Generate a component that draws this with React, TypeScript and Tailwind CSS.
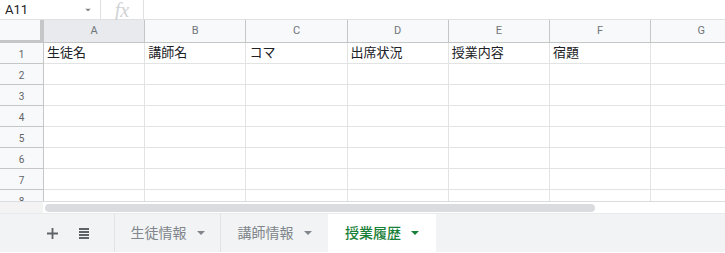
import React from "react";

const COLS = ["A", "B", "C", "D", "E", "F", "G"];
const HEADERS = ["生徒名", "講師名", "コマ", "出席状況", "授業内容", "宿題", ""];
const ROWS = [1, 2, 3, 4, 5, 6, 7, 8];

function Caret({ className = "" }: { className?: string }) {
  return (
    <svg width="8" height="4" viewBox="0 0 8 4" className={className}>
      <path d="M0 0h8L4 4z" fill="currentColor" />
    </svg>
  );
}

export default function App() {
  return (
    <div
      className="w-[725px] h-[253px] overflow-hidden bg-white text-[#202124]"
      style={{ fontFamily: '"Roboto", "Noto Sans CJK JP", sans-serif' }}
    >
      {/* formula bar */}
      <div className="flex h-[19px] items-center">
        <div className="flex w-[100px] items-center justify-between pl-[5px] pr-[8px] text-[13px]">
          <span>A11</span>
          <Caret className="text-[#80868b] scale-75" />
        </div>
        <div className="h-[19px] w-px bg-[#e0e0e0]" />
        <div
          className="flex w-[42px] justify-center text-[20px] italic leading-none text-[#d0d2d4]"
          style={{ fontFamily: '"Liberation Serif", serif' }}
        >
          fx
        </div>
        <div className="h-[19px] w-px bg-[#e0e0e0]" />
      </div>

      {/* column headers */}
      <div className="flex h-[24px] border-t border-[#e0e0e0]">
        <div className="w-[44px] shrink-0 border-b-[3px] border-r-[4px] border-[#c4c6c8] bg-[#f8f9fa]" />
        {COLS.map((c, i) => (
          <div
            key={c}
            className={`flex w-[101.2px] shrink-0 items-center justify-center border-b border-r border-[#c4c7c5] text-[11px] text-[#70757a] ${
              i === 0 ? "bg-[#e8eaed]" : "bg-[#f8f9fa]"
            }`}
          >
            {c}
          </div>
        ))}
      </div>

      {/* rows */}
      <div className="h-[159px] overflow-hidden border-b border-[#dadce0]">
        {ROWS.map((r) => (
          <div key={r} className="flex h-[21px]">
            <div className="flex w-[44px] shrink-0 items-center justify-center border-b border-r border-[#c4c7c5] bg-[#f8f9fa] pt-[2px] text-[10px] text-[#5f6368]">
              {r}
            </div>
            {COLS.map((c, i) => (
              <div
                key={c}
                className="flex w-[101.2px] shrink-0 items-center border-b border-r border-[#e2e3e3] pl-[3px] text-[13px] text-[#202124]"
              >
                {r === 1 ? HEADERS[i] : ""}
              </div>
            ))}
          </div>
        ))}
      </div>

      {/* horizontal scrollbar */}
      <div className="flex h-[11px] items-center">
        <div className="h-full w-[43px] shrink-0 bg-[#f3f3f3]" />
        <div className="ml-[2px] h-[8px] w-[550px] rounded-full bg-[#dadce0]" />
      </div>

      {/* sheet tabs */}
      <div className="flex h-[39px] border-t border-[#e8eaed] bg-[#f1f3f4] text-[14px]">
        <div className="flex w-[114px] items-center gap-[21px] pl-[47px] text-[#5f6368]">
          <svg width="11" height="11" viewBox="0 0 12 12">
            <path d="M5 0h2v5h5v2H7v5H5V7H0V5h5z" fill="currentColor" />
          </svg>
          <svg width="10" height="11" viewBox="0 0 10 11">
            <path d="M0 0h10v2H0zM0 3h10v2H0zM0 6h10v2H0zM0 9h10v2H0z" fill="currentColor" />
          </svg>
        </div>
        <div className="flex w-[106px] items-center justify-center gap-[10px] border-l border-[#e0e2e4] text-[#80868b]">
          <span>生徒情報</span>
          <Caret />
        </div>
        <div className="flex w-[108px] items-center justify-center gap-[10px] border-l border-[#e0e2e4] text-[#80868b]">
          <span>講師情報</span>
          <Caret />
        </div>
        <div className="flex w-[108px] items-center justify-center gap-[10px] bg-white font-medium text-[#188038]">
          <span>授業履歴</span>
          <Caret />
        </div>
      </div>
    </div>
  );
}
